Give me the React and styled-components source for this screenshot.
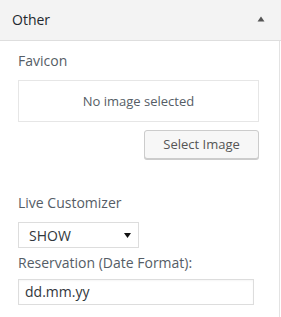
import React from "react";
import styled, { createGlobalStyle } from "styled-components";

const Global = createGlobalStyle`
  html, body { margin: 0; padding: 0; background: #fff; }
  body { font-family: "Open Sans", "Noto Sans", sans-serif; -webkit-font-smoothing: antialiased; }
  * { box-sizing: border-box; }
`;

const Header = styled.div`
  height: 41px;
  background: #f3f3f3;
  border-bottom: 1px solid #dedede;
  display: flex;
  align-items: center;
  justify-content: space-between;
  padding: 0 16px 2px 12px;
  font-size: 14px;
  color: #23282d;
`;

const Panel = styled.div`
  width: 280px;
  min-height: 276px;
  border-right: 1px solid #e3e3e3;
  padding: 11px 0 0 18px;
  display: flex;
  flex-direction: column;
`;

const Label = styled.div`
  font-size: 14px;
  line-height: 18px;
  color: #555d66;
  margin-top: ${(p) => p.$mt || 0}px;
`;

const Placeholder = styled.div`
  margin-top: 10px;
  width: 241px;
  height: 42px;
  border: 1px solid #e6e6e6;
  display: flex;
  align-items: center;
  justify-content: center;
  font-size: 13px;
  color: #555d66;
`;

const ButtonRow = styled.div`
  width: 241px;
  display: flex;
  justify-content: flex-end;
  margin-top: 8px;
`;

const Button = styled.button`
  width: 115px;
  height: 29px;
  background: #f7f7f7;
  border: 1px solid #cccccc;
  border-radius: 3px;
  box-shadow: 0 1px 0 #cccccc;
  font-family: inherit;
  font-size: 13px;
  color: #555;
  padding: 0 0 1px;
`;

const Select = styled.div`
  margin-top: 10px;
  width: 121px;
  height: 26px;
  border: 1px solid #dddddd;
  display: flex;
  align-items: center;
  justify-content: space-between;
  padding: 0 7px 0 10px;
  font-size: 14px;
  color: #32373c;
  text-transform: uppercase;
`;

const Input = styled.div`
  margin-top: 7px;
  width: 236px;
  height: 26px;
  border: 1px solid #dddddd;
  box-shadow: inset 0 1px 2px rgba(0,0,0,0.04);
  display: flex;
  align-items: center;
  padding: 0 0 1px 6px;
  font-size: 14px;
  color: #32373c;
`;

export default function App() {
  return (
    <>
      <Global />
      <Header>
        <span>Other</span>
        <svg width="8" height="6" viewBox="0 0 8 6"><path d="M4 0.5 L7.5 5.5 L0.5 5.5 Z" fill="#555" /></svg>
      </Header>
      <Panel>
        <Label>Favicon</Label>
        <Placeholder>No image selected</Placeholder>
        <ButtonRow>
          <Button>Select Image</Button>
        </ButtonRow>
        <Label $mt={35}>Live Customizer</Label>
        <Select>
          <span>Show</span>
          <svg width="7" height="5" viewBox="0 0 7 5"><path d="M0 0 L7 0 L3.5 5 Z" fill="#111" /></svg>
        </Select>
        <Label $mt={6}>Reservation (Date Format):</Label>
        <Input>dd.mm.yy</Input>
      </Panel>
    </>
  );
}
